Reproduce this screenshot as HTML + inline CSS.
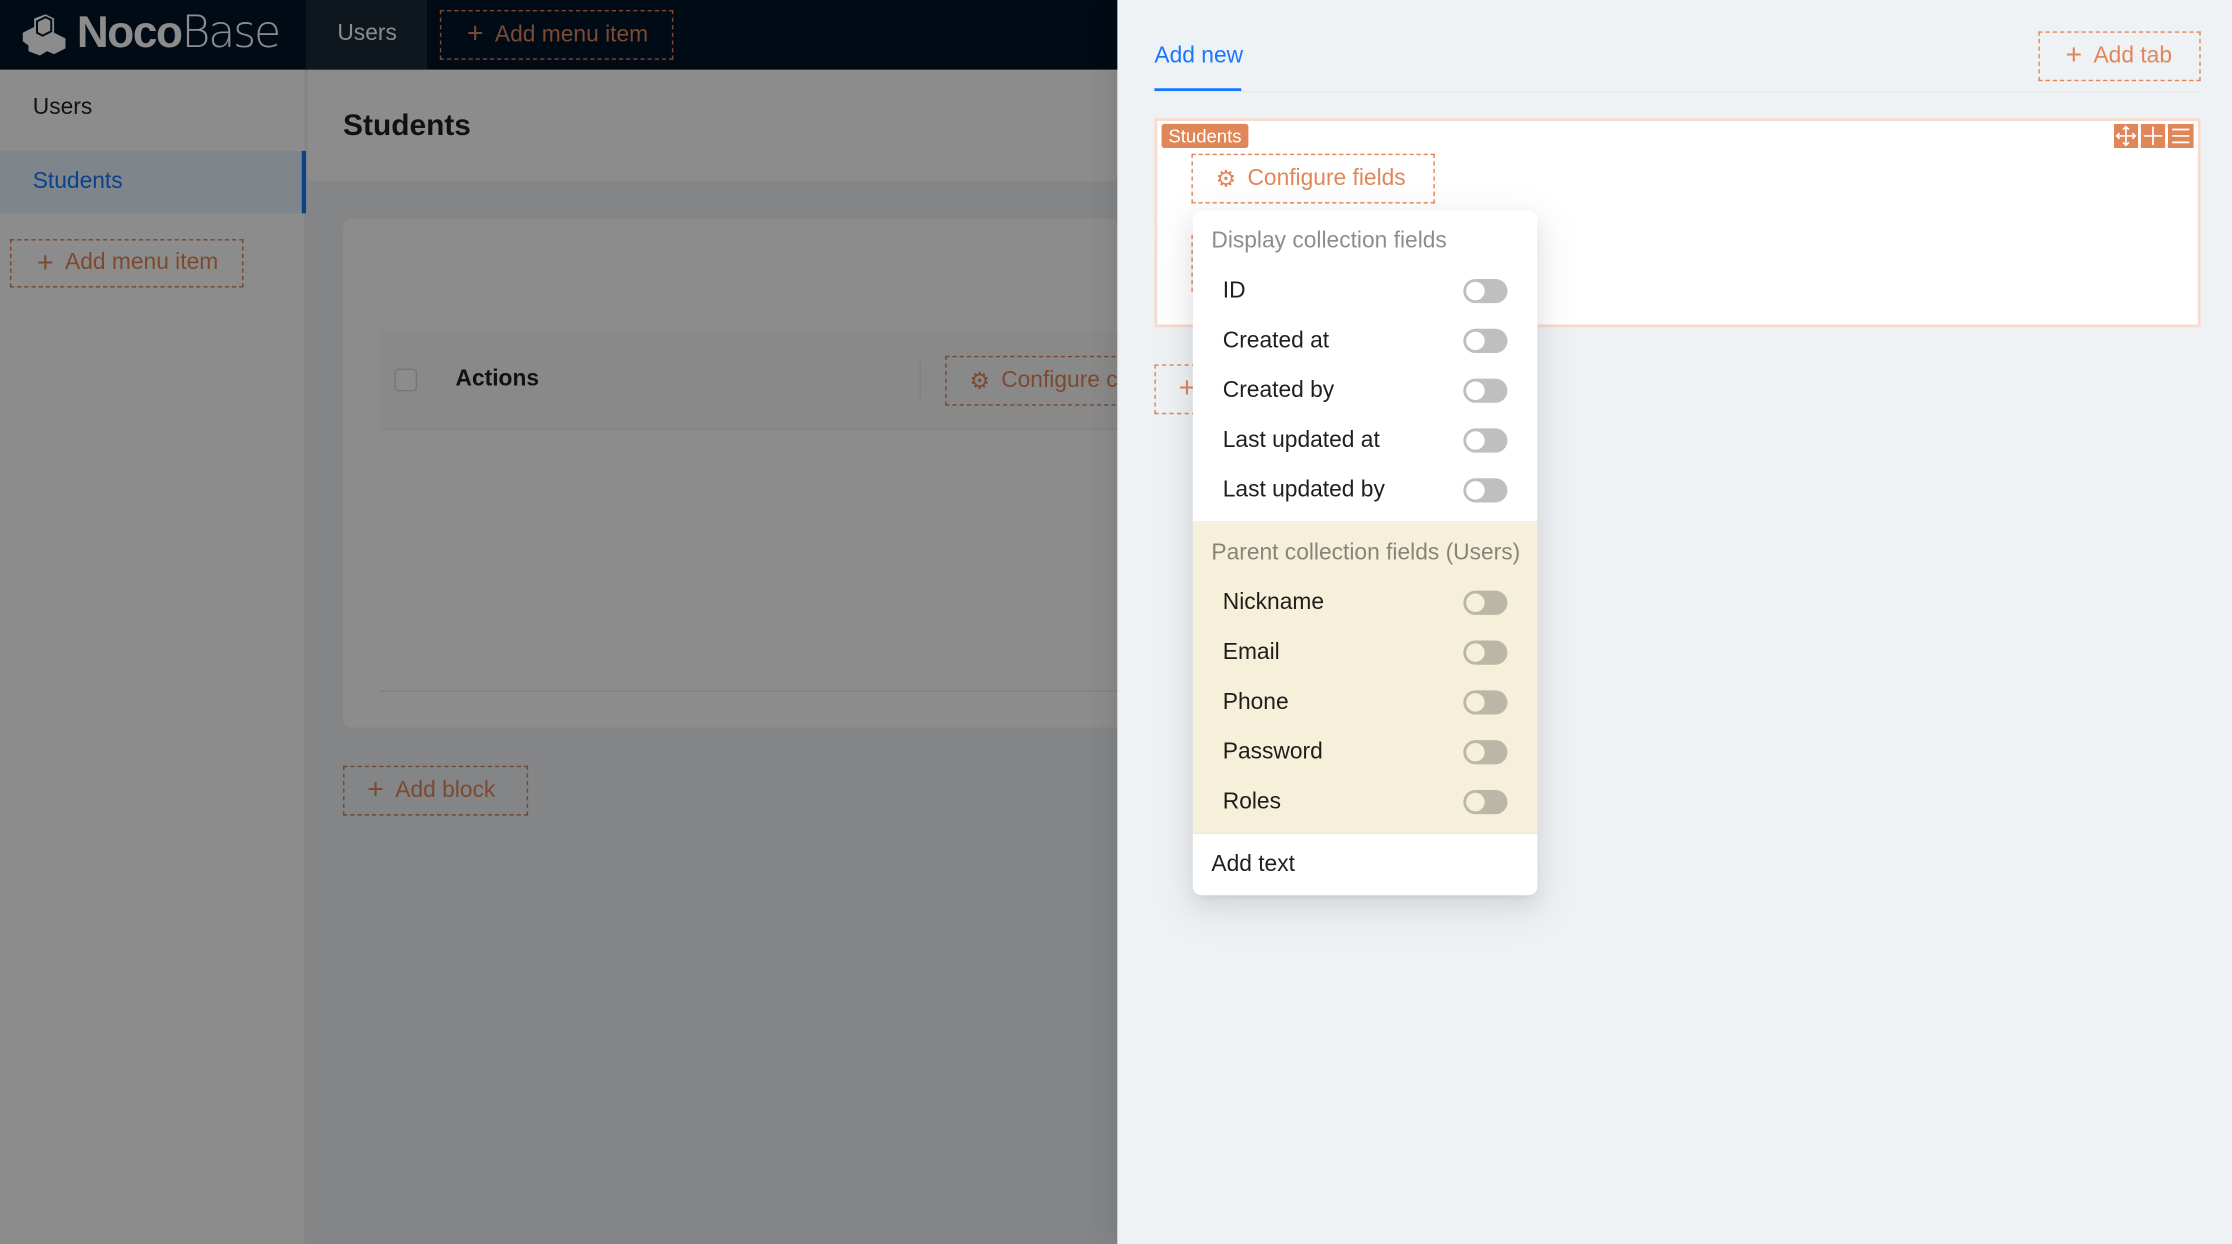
<!DOCTYPE html>
<html><head><meta charset="utf-8">
<style>
*{box-sizing:border-box;margin:0;padding:0}
html,body{width:2232px;height:1244px;overflow:hidden;background:#eff2f5}
body{font-family:"Liberation Sans",Arial,sans-serif;color:rgba(0,0,0,.88)}
#w{position:absolute;left:0;top:0;width:1568px;height:874px;transform:scale(1.42347,1.42334);transform-origin:0 0}
.a{position:absolute}
.dash{position:absolute;border:1px dashed #e0875a;color:#e0875a;font-size:16px;display:flex;align-items:center;padding-left:18px}
.ov .dash{border-color:#d2845a}
.plus{font-size:20px;margin-right:8px;font-weight:300}
.tg{position:absolute;left:190px;width:31px;height:17px;border-radius:9px;background:#bfbfbf}
.tg:after{content:"";position:absolute;left:2px;top:2px;width:13px;height:13px;border-radius:50%;background:#fff}
.par .tg{background:#bab7a6}
.par .tg:after{background:#f6f0da}
.it{position:absolute;left:21px;font-size:16px;color:rgba(0,0,0,.88)}
</style></head><body>
<div id="w">
<div class="a ov" style="left:0;top:0;width:785px;height:874px;background:#f0f2f5;overflow:hidden">
  <div class="a" style="left:0;top:0;width:785px;height:49px;background:#001529"></div>
  <div class="a" style="left:215px;top:0;width:85px;height:49px;background:#1c2a38"></div>
  <div class="a" style="left:237px;top:15px;color:#fff;font-size:16px">Users</div>
  <svg class="a" style="left:14px;top:10px" width="34" height="30" viewBox="0 0 34 30"><path d="M2 13 L10 9 L10 3 L18 0 L24 3 L24 13 L32 17 L32 24 L24 28 L19 26 L14 29 L6 26 L6 22 L2 19Z" fill="#fff"/><path d="M12 5 L18 2 L22 4 L22 12 L16 15 L12 13Z" fill="none" stroke="#001529" stroke-width="1.4"/></svg>
  <div class="a" style="left:54px;top:5px;font-size:31px;color:#fff;letter-spacing:-1px"><b>Noco</b><span style="font-weight:300;color:#fff;font-family:'DejaVu Sans','Liberation Sans',sans-serif;font-size:31px;letter-spacing:-1.5px">Base</span></div>
  <div class="dash" style="left:309px;top:7px;width:164px;height:35px;border-color:#e0875a"><span class="plus">+</span>Add menu item</div>
  <div class="a" style="left:0;top:49px;width:215px;height:825px;background:#fff;border-right:1px solid #eee"></div>
  <div class="a" style="left:23px;top:67px;font-size:16px">Users</div>
  <div class="a" style="left:0;top:106px;width:215px;height:44px;background:#e6f4ff;border-right:3px solid #1677ff"></div>
  <div class="a" style="left:23px;top:119px;font-size:16px;color:#1677ff">Students</div>
  <div class="dash" style="left:7px;top:168px;width:164px;height:34px"><span class="plus">+</span>Add menu item</div>
  <div class="a" style="left:216px;top:49px;width:570px;height:78px;background:#fff"></div>
  <div class="a" style="left:241px;top:77px;font-size:21px;font-weight:bold">Students</div>
  <div class="a" style="left:241px;top:154px;width:560px;height:357px;background:#fff;border-radius:6px"></div>
  <div class="a" style="left:267px;top:233px;width:530px;height:69px;background:#fafafa;border-bottom:1px solid #f0f0f0"></div>
  <div class="a" style="left:277px;top:259px;width:16px;height:16px;border:1px solid #d9d9d9;border-radius:3px;background:#fff"></div>
  <div class="a" style="left:320px;top:258px;font-size:16px;font-weight:bold">Actions</div>
  <div class="a" style="left:646px;top:254px;width:1px;height:26px;background:#e8e8e8"></div>
  <div class="dash" style="left:664px;top:250px;width:140px;height:35px;padding-left:16px"><span style="margin-right:8px;font-size:16px">⚙</span>Configure c</div>
  <div class="a" style="left:267px;top:485px;width:530px;height:1px;background:#e8e8e8"></div>
  <div class="dash" style="left:241px;top:538px;width:130px;height:35px;padding-left:16px"><span class="plus">+</span>Add block</div>
  <div class="a" style="left:0;top:0;width:785px;height:874px;background:rgba(0,0,0,.45)"></div>
</div>
<div class="a" style="left:785px;top:0;width:783px;height:874px;background:#eff2f5;box-shadow:-6px 0 16px rgba(0,0,0,.08)">
  <div class="a" style="left:26px;top:31px;font-size:16px;color:#1677ff">Add new</div>
  <div class="a" style="left:26px;top:62px;width:61px;height:2px;background:#1677ff"></div>
  <div class="a" style="left:26px;top:64px;width:735px;height:1px;background:#e6e9ec"></div>
  <div class="dash" style="left:647px;top:22px;width:114px;height:35px;padding-left:18px"><span class="plus">+</span>Add tab</div>
  <div class="a" style="left:26px;top:83px;width:735px;height:147px;background:#fff;border:2px solid #f5dccf"></div>
  <div class="a" style="left:31px;top:87px;width:61px;height:17px;background:#e0875a;color:#fff;font-size:13px;line-height:17px;text-align:center;border-radius:2px">Students</div>
  <svg class="a" style="left:700px;top:87px" width="57" height="17" viewBox="0 0 57 17"><rect x="0" y="0" width="17" height="17" fill="#e0875a"/><rect x="19" y="0" width="17" height="17" fill="#e0875a"/><rect x="38" y="0" width="18" height="17" fill="#e0875a"/><g stroke="#fff" stroke-width="1.2" fill="none"><path d="M8.5 2v13M2 8.5h13M6.5 4l2-2 2 2M6.5 13l2 2 2-2M4 6.5l-2 2 2 2M13 6.5l2 2-2 2"/><path d="M27.5 2v13M21 8.5h13"/><path d="M41 4h12M41 8.5h12M41 13h12"/></g></svg>
  <div class="dash" style="left:52px;top:108px;width:171px;height:35px;padding-left:16px"><span style="margin-right:8px;font-size:16px">⚙</span>Configure fields</div>
  <div class="a" style="left:52px;top:165px;width:1px;height:40px;border-left:1px dashed #e0875a"></div>
  <div class="dash" style="left:26px;top:256px;width:40px;height:35px;padding-left:16px"><span class="plus">+</span></div>
  <div class="a" style="left:53px;top:148px;width:242px;height:481px;background:#fff;border-radius:6px;box-shadow:0 6px 16px rgba(0,0,0,.08),0 3px 6px -4px rgba(0,0,0,.12),0 9px 28px 8px rgba(0,0,0,.05);overflow:hidden">
    <div class="a" style="left:13px;top:13px;font-size:16px;color:rgba(0,0,0,.45)">Display collection fields</div>
    <div class="it" style="top:48px">ID</div><div class="tg" style="top:48px"></div>
    <div class="it" style="top:83px">Created at</div><div class="tg" style="top:83px"></div>
    <div class="it" style="top:118px">Created by</div><div class="tg" style="top:118px"></div>
    <div class="it" style="top:153px">Last updated at</div><div class="tg" style="top:153px"></div>
    <div class="it" style="top:188px">Last updated by</div><div class="tg" style="top:188px"></div>
    <div class="a" style="left:0;top:218px;width:242px;height:1px;background:#f0f0f0"></div>
    <div class="a par" style="left:0;top:219px;width:242px;height:218px;background:#f6efd9">
      <div class="a" style="left:13px;top:13px;font-size:16px;color:rgba(0,0,0,.45)">Parent collection fields (Users)</div>
      <div class="it" style="top:48px">Nickname</div><div class="tg" style="top:48px"></div>
      <div class="it" style="top:83px">Email</div><div class="tg" style="top:83px"></div>
      <div class="it" style="top:118px">Phone</div><div class="tg" style="top:118px"></div>
      <div class="it" style="top:153px">Password</div><div class="tg" style="top:153px"></div>
      <div class="it" style="top:188px">Roles</div><div class="tg" style="top:188px"></div>
    </div>
    <div class="a" style="left:0;top:437px;width:242px;height:1px;background:#ece8dc"></div>
    <div class="it" style="left:13px;top:451px">Add text</div>
  </div>
</div>
</div>
</body></html>
